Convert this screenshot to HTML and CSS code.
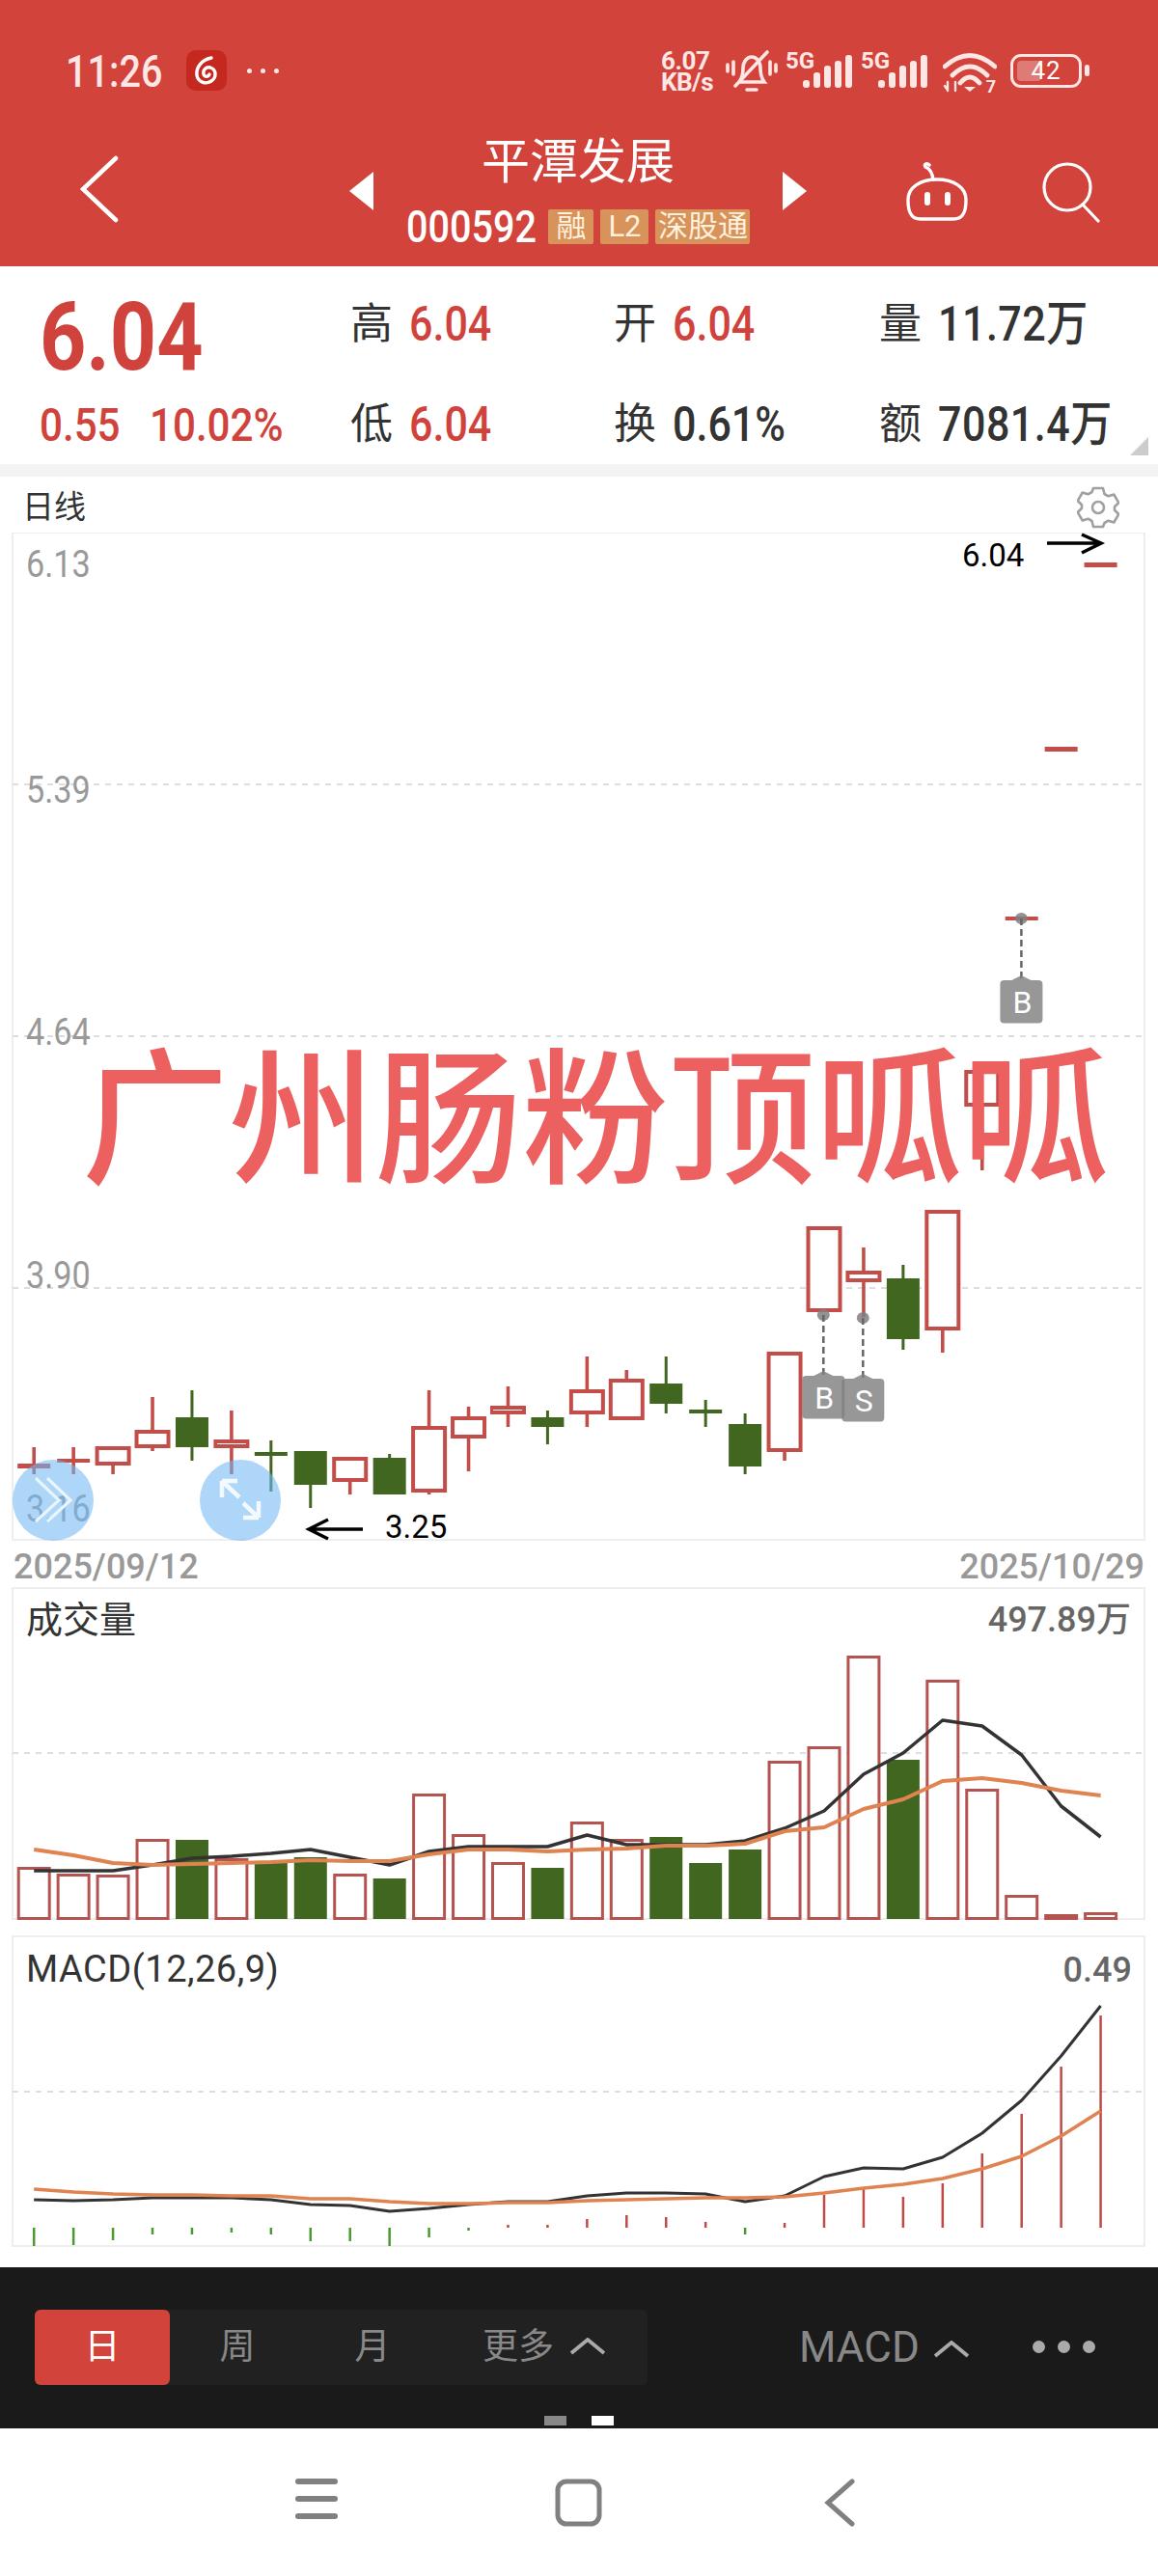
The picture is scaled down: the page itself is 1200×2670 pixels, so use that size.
FILE: index.html
```html
<!DOCTYPE html>
<html lang="zh">
<head>
  <meta charset="utf-8">
  <title>平潭发展 000592</title>
  <link rel="stylesheet" href="styles.css">
</head>
<body>
  <div class="top">
    <div class="status">
      <span class="time">11:26</span>
      <svg class="app-icon" width="42" height="42" viewBox="0 0 42 42">
        <rect width="42" height="42" rx="10" fill="#c5281f"/>
        <path d="M26 8C15 10 10 19 11 26c1 7 9 10 15 6 6-4 5-12-1-14-5-1-8 3-7 7 1 3 5 3 6 0" fill="none" stroke="#fff" stroke-width="3.4" stroke-linecap="round"/>
      </svg>
      <span class="more-dots"><i></i><i></i><i></i></span>
      <span class="speed">6.07<br>KB/s</span>
      <svg class="bell" width="54" height="44" viewBox="0 0 54 44" fill="none" stroke="#fde6e3" stroke-width="3.6" stroke-linecap="round">
        <path d="M14 33c3-4 4-8 4-14 0-7 4-12 9-12s9 5 9 12c0 6 1 10 4 14z"/>
        <path d="M22 41h10"/>
        <path d="M10 37 43 2"/>
        <path d="M2 15v7M8 12v13M46 12v13M52 15v7"/>
      </svg>
      <span class="sig"><b>5G</b>
        <svg width="54" height="36" viewBox="0 0 54 36" fill="#fde6e3">
          <rect x="0" y="26" width="7" height="8" rx="3"/><rect x="11" y="18" width="7" height="16" rx="3"/><rect x="22" y="11" width="7" height="23" rx="3"/><rect x="33" y="6" width="7" height="28" rx="3"/><rect x="44" y="0" width="7" height="34" rx="3"/>
        </svg>
      </span>
      <span class="sig"><b>5G</b>
        <svg width="54" height="36" viewBox="0 0 54 36" fill="#fde6e3">
          <rect x="0" y="26" width="7" height="8" rx="3"/><rect x="11" y="18" width="7" height="16" rx="3"/><rect x="22" y="11" width="7" height="23" rx="3"/><rect x="33" y="6" width="7" height="28" rx="3"/><rect x="44" y="0" width="7" height="34" rx="3"/>
        </svg>
      </span>
      <span class="wifi">
        <svg width="56" height="42" viewBox="0 0 56 42" fill="none" stroke="#fde6e3" stroke-width="4.8" stroke-linecap="round">
          <path d="M2 15Q28-8 54 15"/>
          <path d="M10 24Q28 6 46 24"/>
          <path d="M18 32Q28 20 38 32"/>
          <path d="M22 36h12l-6 5z" fill="#fde6e3" stroke="none"/>
          <path d="M5 31v9M4 38l-2-3M13 40v-9" stroke-width="2.4"/>
        </svg>
        <b>7</b>
      </span>
      <span class="battery"><i class="battery-level"></i><em>42</em></span>
      <i class="battery-nub"></i>
    </div>

    <div class="nav">
      <svg class="back" width="40" height="70" viewBox="0 0 40 70" fill="none" stroke="#fff" stroke-width="4.6" stroke-linecap="round">
        <path d="M37 3 3 35l34 32"/>
      </svg>
      <i class="tri tri-left"></i>
      <div class="name-block">
        <div class="name">平潭发展</div>
        <div class="code-row">
          <span class="code">000592</span>
          <span class="tag tag-rong">融</span>
          <span class="tag tag-l2">L2</span>
          <span class="tag tag-sgt">深股通</span>
        </div>
      </div>
      <i class="tri tri-right"></i>
      <div class="nav-tools">
        <svg width="68" height="62" viewBox="0 0 68 62" fill="none" stroke="#fff" stroke-width="3.4" stroke-linecap="round">
          <path d="M26 4c-3-3-6 0-4 2 5 2 7 6 8 13"/>
          <path d="M4 40C4 27 17 19 34 19s30 8 30 21c0 6 0 11-3 15-2 4-6 5-10 5H17c-4 0-8-1-10-5-3-4-3-9-3-15z"/>
          <path d="M24 35v8M45 35v8" stroke-width="6"/>
        </svg>
        <svg width="62" height="64" viewBox="0 0 62 64" fill="none" stroke="#fff" stroke-width="3.2" stroke-linecap="round">
          <circle cx="27" cy="27" r="24"/>
          <path d="M43 45 59 62"/>
        </svg>
      </div>
    </div>
  </div>

  <div class="stats">
    <div class="price">6.04</div>
    <div class="stat"><span class="k">高</span><span class="v up">6.04</span></div>
    <div class="stat"><span class="k">开</span><span class="v up">6.04</span></div>
    <div class="stat stat-wide"><span class="k">量</span><span class="v">11.72万</span></div>
    <div class="change"><span>0.55</span><span>10.02%</span></div>
    <div class="stat"><span class="k">低</span><span class="v up">6.04</span></div>
    <div class="stat"><span class="k">换</span><span class="v">0.61%</span></div>
    <div class="stat stat-wide"><span class="k">额</span><span class="v">7081.4万</span></div>
    <i class="corner"></i>
  </div>
  <div class="divider"></div>

  <div class="kline-head">
    <span>日线</span>
    <svg width="44" height="44" viewBox="0 0 44 44" fill="none" stroke="#a0a0a0" stroke-width="2.6" stroke-linejoin="round">
      <path d="M17 2h10l1.500 6 4 2.300 5.800-1.800 5 8.500-4.300 4.200v3.600l4.300 4.200-5 8.500-5.800-1.800-4 2.300L27 42H17l-1.500-6-4-2.300-5.800 1.800-5-8.500L5 22.800v-3.600L.7 15l5-8.500 5.800 1.800 4-2.300z"/>
      <circle cx="22" cy="22" r="6"/>
    </svg>
  </div>

  <div class="kline">
    <svg id="kline-svg" class="panel" width="1200" height="1056" viewBox="0 552 1200 1056">
      <text class="axis" x="27" y="598">6.13</text>
      <text class="axis" x="27" y="832">5.39</text>
      <text class="axis" x="27" y="1083">4.64</text>
      <text class="axis" x="27" y="1335">3.90</text>
      <text class="note" x="997" y="587">6.04</text>
      <text class="note" x="399" y="1594">3.25</text>
      <path class="note-arrow" d="M1085 563h55M1121 554l20 9-20 10"/>
      <path class="note-arrow" d="M376 1585h-55M340 1575l-20 10 20 10"/>
    </svg>
    <div class="watermark">广州肠粉顶呱呱</div>
  </div>

  <div class="dates"><span>2025/09/12</span><span>2025/10/29</span></div>

  <svg id="vol-svg" class="panel" width="1200" height="346" viewBox="0 1645 1200 346">
    <text class="panel-title" x="27" y="1692">成交量</text>
    <text class="panel-value" x="1172" y="1691" text-anchor="end">497.89万</text>
  </svg>

  <svg id="macd-svg" class="panel macd-panel" width="1200" height="324" viewBox="0 2006 1200 324">
    <text class="panel-title macd-title" x="27" y="2054">MACD(12,26,9)</text>
    <text class="panel-value" x="1173" y="2054" text-anchor="end">0.49</text>
  </svg>

  <div class="toolbar">
    <div class="periods">
      <span class="period active">日</span>
      <span class="period">周</span>
      <span class="period">月</span>
      <span class="period period-more">更多
        <svg class="caret" width="38" height="18" viewBox="0 0 38 18"><path d="M2 16 19 2l17 14"/></svg>
      </span>
    </div>
    <span class="indicator">MACD
      <svg class="caret" width="38" height="18" viewBox="0 0 38 18"><path d="M2 16 19 2l17 14"/></svg>
    </span>
    <span class="dots"><i></i><i></i><i></i></span>
    <div class="pager"><i></i><i class="on"></i></div>
  </div>

  <div class="navbar">
    <svg width="46" height="44" viewBox="0 0 46 44" fill="#808080">
      <rect x="1" y="0" width="44" height="6" rx="3"/><rect x="1" y="18" width="44" height="6" rx="3"/><rect x="1" y="36" width="44" height="6" rx="3"/>
    </svg>
    <svg width="50" height="50" viewBox="0 0 50 50" fill="none" stroke="#808080" stroke-width="5">
      <rect x="3" y="3" width="43" height="44" rx="9"/>
    </svg>
    <svg class="nav-back" width="32" height="50" viewBox="0 0 32 50" fill="none" stroke="#808080" stroke-width="5" stroke-linecap="round">
      <path d="M29 3 4 25l25 22"/>
    </svg>
  </div>

  <div class="float-btn float-left">
    <svg width="84" height="84" viewBox="0 0 84 84" fill="none" stroke="#eaf4fd" stroke-width="3.2"><path d="M24 19l24 23-24 22M36 19l24 23-24 22"/></svg>
  </div>
  <div class="float-btn float-right">
    <svg width="84" height="84" viewBox="0 0 84 84" fill="none" stroke="#f3f9fe" stroke-width="4.500"><path d="M23 22h16M23 22v17M23 22l18 17M61 60H45M61 60V43M61 60 45 45"/></svg>
  </div>

  <script src="chart.js"></script>
</body>
</html>
```

FILE: styles.css
```css
* {
  box-sizing: border-box;
}

body {
  margin: 0;
  width: 1200px;
  height: 2670px;
  overflow: hidden;
  position: relative;
  background: #fff;
  color: #333;
  font-family: Roboto, "Noto Sans CJK SC", sans-serif;
}

i {
  display: block;
  font-style: normal;
}

/* the quote digits use a condensed face, Roboto squeezed comes closest */
.time, .code, .price, .v, .change span {
  display: inline-block;
  transform: scaleX(.86);
  transform-origin: left center;
}

.top {
  height: 276px;
  background: #d2433b;
  color: #fff;
}

/* status bar */
.status {
  height: 120px;
  padding: 52px 0 0 68px;
  display: flex;
  align-items: flex-start;
  color: #fde6e3;
}

.time {
  width: 125px;
  font-size: 46px;
  font-weight: 500;
  line-height: 44px;
}

.more-dots {
  display: flex;
  gap: 9px;
  margin: 19px 0 0 21px;
  width: 429px;
}

.more-dots i {
  width: 5px;
  height: 5px;
  border-radius: 50%;
  background: #fde6e3;
}

.speed {
  width: 67px;
  font-size: 26px;
  font-weight: 700;
  line-height: 22px;
  letter-spacing: -.5px;
  flex: none;
}

.sig {
  margin-left: 8px;
  width: 70px;
  height: 44px;
  position: relative;
  flex: none;
}

.sig b {
  font-size: 24px;
  line-height: 22px;
  display: block;
}

.sig svg {
  position: absolute;
  left: 18px;
  top: 5px;
}

.wifi {
  margin-left: 15px;
  position: relative;
  width: 60px;
}

.wifi svg {
  display: block;
  margin-top: 2px;
}

.wifi b {
  position: absolute;
  right: 5px;
  top: 27px;
  font-size: 18px;
}

.battery {
  margin: 4px 0 0 10px;
  width: 74px;
  height: 35px;
  border: 3px solid #fde6e3;
  border-radius: 11px;
  position: relative;
  text-align: center;
}

.battery-level {
  position: absolute;
  left: 4px;
  top: 4px;
  width: 25px;
  height: 21px;
  border-radius: 4px;
  background: rgba(255, 255, 255, .3);
}

.battery em {
  position: relative;
  font-style: normal;
  font-size: 26px;
  line-height: 29px;
  color: #fff;
  letter-spacing: 1px;
}

.battery-nub {
  width: 5px;
  height: 12px;
  margin: 15px 0 0 3px;
  border-radius: 3px;
  background: #fde6e3;
}

/* title row */
.nav {
  display: grid;
  grid-template-columns: 362px 25px 424px 25px 1fr;
  align-items: start;
  height: 156px;
}

.back {
  margin: 41px 0 0 83px;
}

.tri {
  width: 0;
  height: 0;
  margin-top: 58px;
  border-top: 20px solid transparent;
  border-bottom: 20px solid transparent;
}

.tri-left {
  border-right: 25px solid #fff;
}

.tri-right {
  border-left: 25px solid #fff;
}

.name-block {
  text-align: center;
}

.name {
  font-size: 50px;
  line-height: 60px;
  margin-top: 18px;
}

.code-row {
  display: flex;
  justify-content: center;
  align-items: center;
  margin-top: 19px;
}

.code {
  font-size: 46px;
  font-weight: 500;
  line-height: 36px;
  margin-right: -9px;
}

.tag {
  height: 36px;
  line-height: 36px;
  margin-right: 7px;
  background: #d8935a;
  color: #fdf0dd;
  border-radius: 2px;
  font-size: 31px;
  text-align: center;
}

.tag-rong {
  width: 47px;
}

.tag-l2 {
  width: 50px;
}

.tag-sgt {
  width: 98px;
  margin-right: 0;
}

.nav-tools {
  display: flex;
  align-items: flex-start;
  gap: 74px;
  padding: 47px 0 0 101px;
}

/* quote block */
.stats {
  height: 205px;
  padding: 37px 0 0 41px;
  display: grid;
  grid-template-columns: 322px 273px 273px 1fr;
  grid-template-rows: 62px 1fr;
  position: relative;
}

.price {
  font-size: 98px;
  font-weight: 700;
  line-height: 74px;
  color: #d0433d;
}

.stat {
  display: flex;
  align-items: center;
  height: 46px;
}

.stat:nth-of-type(n+6) {
  margin-top: 42px;
}

.stat-wide {
  margin-left: 2px;
}

.stat-wide .v {
  letter-spacing: .6px;
}

.k {
  font-size: 44px;
  line-height: 46px;
  width: 61px;
  flex: none;
}

.v {
  font-size: 50px;
  font-weight: 500;
  line-height: 46px;
  white-space: nowrap;
  color: #333;
}

.up {
  color: #d0433d;
}

.change {
  display: flex;
  gap: 17px;
  margin-top: 43px;
  font-size: 49px;
  font-weight: 500;
  line-height: 46px;
  white-space: nowrap;
  color: #d0433d;
}

.corner {
  position: absolute;
  right: 10px;
  bottom: 9px;
  width: 0;
  height: 0;
  border-left: 19px solid transparent;
  border-bottom: 19px solid #ccc;
}

.divider {
  height: 13px;
  background: #f3f3f3;
}

/* charts */
.kline-head {
  height: 58px;
  padding: 10px 40px 0 23px;
  display: flex;
  justify-content: space-between;
  align-items: flex-start;
  font-size: 33px;
  line-height: 44px;
}

.kline {
  position: relative;
  height: 1056px;
}

.panel {
  display: block;
}

.macd-panel {
  margin-top: 15px;
}

.axis {
  font-size: 38px;
  fill: #999;
  transform-box: fill-box;
  transform-origin: left center;
  transform: scaleX(.9);
}

.note {
  font-size: 33px;
  fill: #000;
}

.note-arrow {
  fill: none;
  stroke: #000;
  stroke-width: 3.500;
}

.panel-title {
  font-size: 38px;
  fill: #333;
}

.macd-title {
  letter-spacing: .5px;
}

.panel-value {
  font-size: 36px;
  font-weight: 500;
  fill: #666;
}

.sign-text {
  font-size: 32px;
  fill: #fff;
  text-anchor: middle;
}

.watermark {
  position: absolute;
  left: 85px;
  top: 516px;
  font-size: 152px;
  line-height: 190px;
  font-weight: 500;
  color: #ec6060;
  white-space: nowrap;
}

.dates {
  height: 37px;
  padding: 0 14px;
  display: flex;
  justify-content: space-between;
  font-size: 36px;
  line-height: 32px;
  font-weight: 500;
  color: #999;
}

/* bottom toolbar */
.toolbar {
  margin-top: 20px;
  height: 167px;
  background: #1a1a1a;
  padding: 44px 0 0 36px;
  display: flex;
  align-items: flex-start;
  position: relative;
}

.periods {
  width: 635px;
  height: 78px;
  display: flex;
  align-items: center;
  background: #212121;
  border-radius: 6px;
  color: #888;
  font-size: 37px;
}

.period {
  width: 140px;
  height: 78px;
  line-height: 78px;
  text-align: center;
}

.period.active {
  background: #d2433b;
  color: #fff;
  border-radius: 6px;
}

.period-more {
  width: 200px;
  margin-left: 8px;
}

.period-more .caret {
  margin-left: 7px;
}

.caret {
  fill: none;
  stroke: #aaa;
  stroke-width: 3.800;
  margin-left: 3px;
  vertical-align: 4px;
}

.indicator {
  margin-left: 157px;
  font-size: 44px;
  line-height: 78px;
  color: #888;
  white-space: nowrap;
}

.dots {
  display: flex;
  gap: 13px;
  margin: 32px 0 0 65px;
}

.dots i {
  width: 13px;
  height: 13px;
  border-radius: 50%;
  background: #aaa;
}

.pager {
  position: absolute;
  left: 564px;
  top: 154px;
  display: flex;
  gap: 26px;
}

.pager i {
  width: 23px;
  height: 10px;
  background: #888;
}

.pager i.on {
  background: #fff;
}

.navbar {
  height: 153px;
  padding: 52px 0 0 305px;
  display: flex;
  align-items: flex-start;
  gap: 224px;
}

.nav-back {
  margin-left: 5px;
}

/* round shortcuts over the chart */
.float-btn {
  position: absolute;
  top: 1513px;
  width: 84px;
  height: 84px;
  border-radius: 50%;
  background: rgba(115, 185, 245, .58);
}

.float-btn svg {
  display: block;
}

.float-left {
  left: 13px;
}

.float-right {
  left: 207px;
}
```

FILE: chart.js
```javascript
var NS = 'http://www.w3.org/2000/svg';
var RED = '#c24d49', GREEN = '#41661f', LINE_DARK = '#333', LINE_ORANGE = '#df8350';

function cx(i) {
  return 35.2 + 40.94 * i;
}

function add(svg, tag, attrs, text) {
  var el = document.createElementNS(NS, tag);
  for (var k in attrs) el.setAttribute(k, attrs[k]);
  if (text) el.textContent = text;
  svg.appendChild(el);
  return el;
}

function frame(svg, x, y, w, h, grids) {
  var first = svg.firstChild;
  var g = add(svg, 'g', {});
  add(g, 'rect', { x: x, y: y, width: w, height: h, fill: 'none', stroke: '#eee', 'stroke-width': 2 });
  grids.forEach(function (gy) {
    add(g, 'line', { x1: x, x2: x + w, y1: gy, y2: gy, stroke: '#ddd', 'stroke-width': 2, 'stroke-dasharray': '6 6' });
  });
  svg.insertBefore(g, first);
}

function polyline(svg, ys, color, width) {
  var pts = ys.map(function (y, i) { return cx(i).toFixed(1) + ',' + y; }).join(' ');
  add(svg, 'polyline', { points: pts, fill: 'none', stroke: color, 'stroke-width': width, 'stroke-linejoin': 'round' });
}

// top, body top, body bottom, bottom, up?
var candles = [
  [1500, 1517, 1522, 1528, 1], [1500, 1512, 1516, 1528, 1], [1499, 1499, 1519, 1528, 1],
  [1448, 1482, 1501, 1504, 1], [1441, 1469, 1500, 1514, 0], [1462, 1492, 1501, 1528, 1],
  [1493, 1505, 1509, 1546, 0], [1504, 1504, 1539, 1563, 0], [1510, 1510, 1536, 1549, 1],
  [1507, 1511, 1549, 1549, 0], [1441, 1478, 1547, 1549, 1], [1458, 1468, 1491, 1525, 1],
  [1437, 1457, 1466, 1479, 1], [1462, 1469, 1479, 1497, 0], [1406, 1440, 1466, 1479, 1],
  [1420, 1429, 1472, 1472, 1], [1406, 1434, 1455, 1465, 0], [1451, 1461, 1465, 1479, 0],
  [1465, 1476, 1520, 1528, 0], [1401, 1401, 1505, 1514, 1], [1271, 1271, 1360, 1360, 1],
  [1293, 1317, 1329, 1365, 1], [1311, 1325, 1388, 1399, 0], [1254, 1254, 1379, 1402, 1],
  [1100, 1109, 1147, 1213, 1], [952, 950, 954, 954, 1], [776, 774, 779, 779, 1], [585, 583, 588, 588, 1]
];

var kline = document.getElementById('kline-svg');
frame(kline, 13, 552, 1173, 1044, [813, 1074, 1335]);

candles.forEach(function (c, i) {
  var x = cx(i), color = c[4] ? RED : GREEN, thin = c[2] - c[1] < 6;
  if (c[0] < c[1] || c[3] > c[2]) {
    add(kline, 'line', { x1: x, x2: x, y1: c[0], y2: c[3], stroke: color, 'stroke-width': c[4] ? 3.6 : 3 });
  }
  if (thin) {
    add(kline, 'rect', { x: x - 17, y: c[1], width: 34, height: c[2] - c[1], fill: color });
  } else if (c[4]) {
    add(kline, 'rect', { x: x - 16.5, y: c[1] + 2, width: 33, height: c[2] - c[1] - 4, fill: '#fff', stroke: color, 'stroke-width': 4 });
  } else {
    add(kline, 'rect', { x: x - 17, y: c[1], width: 34, height: c[2] - c[1], fill: color });
  }
});

// buy and sell marks
[[853.3, 1363, 1426, 'B'], [894.3, 1366, 1429, 'S'], [1058.4, 952, 1016, 'B']].forEach(function (m) {
  add(kline, 'ellipse', { cx: m[0], cy: m[1], rx: 6.500, ry: 6, fill: '#808080', opacity: .85 });
  add(kline, 'line', { x1: m[0], x2: m[0], y1: m[1], y2: m[2], stroke: '#666', 'stroke-width': 2.500, 'stroke-dasharray': '7 4' });
  add(kline, 'path', { d: 'M' + (m[0] - 10) + ' ' + m[2] + 'l10 -5 10 5z', fill: '#808080', opacity: .82 });
  add(kline, 'rect', { x: m[0] - 22, y: m[2], width: 44, height: 44.500, rx: 4, fill: '#808080', opacity: .82 });
  add(kline, 'text', { x: m[0] + 1, y: m[2] + 34, 'class': 'sign-text' }, m[3]);
});

// price label that sits in the lower left, under the round button
add(kline, 'text', { x: 27, y: 1577, 'class': 'axis' }, '3.16');

// volume panel
var volTops = [1935, 1942, 1943, 1906, 1907, 1926, 1930, 1925, 1942, 1947, 1859, 1901, 1930, 1936, 1888,
  1906, 1904, 1931, 1917, 1825, 1810, 1716, 1824, 1741, 1854, 1964, 1984, 1982];
var volUp = [1, 1, 1, 1, 0, 1, 0, 0, 1, 0, 1, 1, 1, 0, 1, 1, 0, 0, 0, 1, 1, 1, 0, 1, 1, 1, 1, 1];
var volDark = [1939, 1939, 1939, 1933, 1926, 1924, 1921, 1917, 1925, 1933, 1919, 1914, 1914, 1914, 1902,
  1912, 1912, 1912, 1908, 1895, 1877, 1839, 1817, 1783, 1789, 1819, 1872, 1904];
var volOrange = [1917, 1923, 1931, 1933, 1932, 1931, 1930, 1928, 1929, 1929, 1922, 1917, 1917, 1919, 1917,
  1916, 1913, 1913, 1911, 1898, 1894, 1875, 1865, 1846, 1843, 1848, 1856, 1861];

var vol = document.getElementById('vol-svg');
frame(vol, 13, 1646, 1173, 343, [1817]);
volTops.forEach(function (top, i) {
  var x = cx(i);
  if (volUp[i]) {
    add(vol, 'rect', { x: x - 16, y: top + 1.500, width: 32, height: 1987 - top, fill: '#fff', stroke: '#b55350', 'stroke-width': 3 });
  } else {
    add(vol, 'rect', { x: x - 17, y: top, width: 34, height: 1989 - top, fill: GREEN });
  }
});
polyline(vol, volDark, LINE_DARK, 3.500);
polyline(vol, volOrange, LINE_ORANGE, 4);

// macd panel
var macdEnd = [2328, 2327, 2322, 2316, 2316, 2314, 2316, 2323, 2323, 2328, 2319, 2312,
  2306, 2306, 2300, 2296, 2298, 2303, 2316, 2304, 2275, 2267, 2277, 2263, 2232, 2191, 2142, 2089];
var macdDark = [2280, 2281, 2280, 2278, 2278, 2278, 2280, 2285, 2286, 2292, 2289, 2285, 2282, 2282,
  2276, 2273, 2273, 2274, 2282, 2276, 2256, 2247, 2248, 2236, 2211, 2177, 2131, 2079];
var macdOrange = [2269, 2272, 2274, 2275, 2275, 2276, 2276, 2279, 2279, 2282, 2284, 2284, 2283, 2283,
  2281, 2280, 2279, 2278, 2278, 2277, 2273, 2268, 2264, 2258, 2248, 2235, 2214, 2188];

var macd = document.getElementById('macd-svg');
frame(macd, 13, 2007, 1173, 321, [2168]);
macdEnd.forEach(function (end, i) {
  var green = i < 12 || i == 18;
  add(macd, 'line', { x1: cx(i), x2: cx(i), y1: 2309, y2: end, stroke: green ? '#4a9a30' : '#c04a45', 'stroke-width': 2.500 });
});
polyline(macd, macdDark, LINE_DARK, 3);
polyline(macd, macdOrange, LINE_ORANGE, 3.500);
```
